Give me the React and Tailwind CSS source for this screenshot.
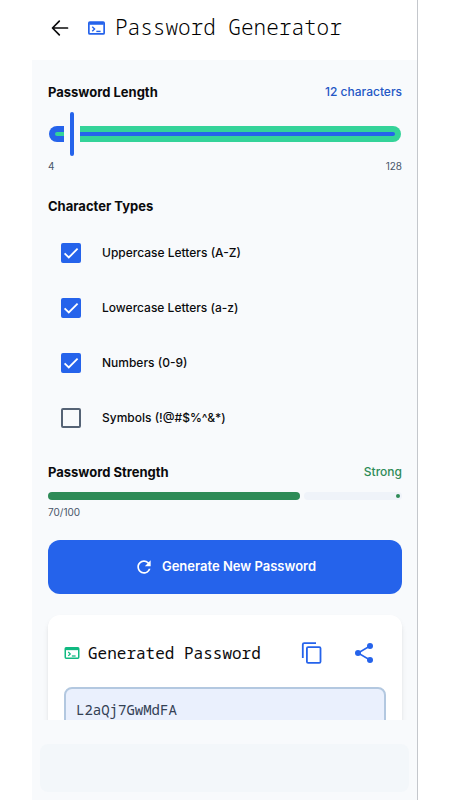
import { useState } from 'react'
import { MdRefresh } from 'react-icons/md'

const MIN = 4
const MAX = 128

const TYPES = [
  { id: 'upper', label: 'Uppercase Letters (A-Z)', chars: 'ABCDEFGHIJKLMNOPQRSTUVWXYZ' },
  { id: 'lower', label: 'Lowercase Letters (a-z)', chars: 'abcdefghijklmnopqrstuvwxyz' },
  { id: 'numbers', label: 'Numbers (0-9)', chars: '0123456789' },
  { id: 'symbols', label: 'Symbols (!@#$%^&*)', chars: '!@#$%^&*' },
]

function BackIcon({ className }) {
  return (
    <svg viewBox="0 0 24 24" fill="none" stroke="currentColor" strokeWidth="1.7" strokeLinecap="round" strokeLinejoin="round" className={className}>
      <path d="M19.5 12H4.8M11.3 5.2 4.5 12l6.8 6.8" />
    </svg>
  )
}

function TerminalIcon({ className }) {
  return (
    <svg viewBox="0 0 20 16" fill="none" stroke="currentColor" className={className}>
      <rect x="1" y="1" width="18" height="14" rx="1.2" strokeWidth="2" />
      <path d="M1.5 2.6h17" strokeWidth="3.2" />
      <path d="m5 6.6 2.7 2.6L5 11.8" strokeWidth="1.7" />
      <path d="M9.8 12h5" strokeWidth="1.7" />
    </svg>
  )
}

function CheckIcon({ className }) {
  return (
    <svg viewBox="0 0 20 20" fill="none" stroke="currentColor" strokeWidth="1.8" className={className}>
      <path d="m3.6 10.4 4.2 4.1 8.8-8.8" />
    </svg>
  )
}

function CopyIcon({ className }) {
  return (
    <svg viewBox="0 0 24 24" fill="none" stroke="currentColor" strokeWidth="1.8" className={className}>
      <path d="M16 2.2H4.2a1.4 1.4 0 0 0-1.4 1.4V17" />
      <rect x="6.9" y="6.1" width="13.6" height="15.8" rx="1.2" />
    </svg>
  )
}

function ShareIcon({ className }) {
  return (
    <svg viewBox="0 0 24 24" fill="currentColor" stroke="currentColor" className={className}>
      <path d="M18 5 6 12l12 7" fill="none" strokeWidth="1.5" />
      <circle cx="18" cy="5" r="3" stroke="none" />
      <circle cx="6" cy="12" r="3" stroke="none" />
      <circle cx="18" cy="19" r="3" stroke="none" />
    </svg>
  )
}

function LengthSlider({ value, onChange }) {
  const pct = ((value - MIN) / (MAX - MIN)) * 100
  return (
    <div className="relative mx-px flex h-11 items-center gap-1.5">
      <div
        className="flex h-4 shrink-0 items-center overflow-hidden rounded-l-full rounded-r-xs bg-[#2563eb] pl-1.5"
        style={{ width: `calc(${pct}% - 8px)` }}
      >
        <div className="h-1 flex-1 rounded-l-full bg-[#34d399]" />
      </div>
      <div className="h-11 w-1 shrink-0 rounded-full bg-[#2563eb]" />
      <div className="flex h-4 flex-1 items-center rounded-l-xs rounded-r-full bg-[#34d399] pr-1.5">
        <div className="h-1 flex-1 rounded-r-full bg-[#2563eb]" />
      </div>
      <input
        id="length"
        type="range"
        min={MIN}
        max={MAX}
        value={value}
        onChange={e => onChange(Number(e.target.value))}
        className="absolute inset-0 h-full w-full cursor-pointer opacity-0"
      />
    </div>
  )
}

function TypeOption({ id, label, checked, onChange }) {
  return (
    <label htmlFor={id} className="flex h-[55px] items-center gap-[21px] pl-[13px] text-xs font-medium">
      <span className="grid">
        <input
          id={id}
          type="checkbox"
          checked={checked}
          onChange={onChange}
          className="col-start-1 row-start-1 size-5 appearance-none rounded-xs border-2 border-[#556375] checked:border-[#2563eb] checked:bg-[#2563eb]"
        />
        {checked && <CheckIcon className="pointer-events-none col-start-1 row-start-1 size-5 text-white" />}
      </span>
      {label}
    </label>
  )
}

export default function App() {
  const [length, setLength] = useState(12)
  const [enabled, setEnabled] = useState({ upper: true, lower: true, numbers: true, symbols: false })
  const [password, setPassword] = useState('L2aQj7GwMdFA')
  const score = 70

  function generate() {
    const pool = TYPES.filter(t => enabled[t.id]).map(t => t.chars).join('')
    if (!pool) return
    const values = crypto.getRandomValues(new Uint32Array(length))
    setPassword(Array.from(values, v => pool[v % pool.length]).join(''))
  }

  return (
    <div className="h-screen bg-white px-8 font-['Inter',sans-serif] text-[#0b0b0d]">
      <div className="flex h-full flex-col border-r border-[#c4c7cc] bg-[#f8fafc]">
        <header className="flex h-[60px] shrink-0 items-center bg-white px-4 pb-1">
          <button type="button" aria-label="Back"><BackIcon className="size-6" /></button>
          <TerminalIcon className="ml-4 h-[14px] w-[17px] text-[#2563eb]" />
          <h1 className="ml-2.5 font-['Noto_Sans_Mono','DejaVu_Sans_Mono',monospace] text-[21px] font-light whitespace-nowrap text-black">Password Generator</h1>
        </header>

        <main className="min-h-0 flex-1 overflow-hidden pr-[15px] pl-4 pt-[22px]">
          <div className="flex items-center justify-between leading-5">
            <label htmlFor="length" className="text-[13px] font-bold">Password Length</label>
            <span className="text-xs font-medium text-[#2457c5]">{length} characters</span>
          </div>
          <div className="mt-2.5">
            <LengthSlider value={length} onChange={setLength} />
          </div>
          <div className="mt-0.5 flex justify-between text-[10px] leading-4 text-[#475569]">
            <span>{MIN}</span>
            <span>{MAX}</span>
          </div>

          <h2 className="mt-[22px] text-[13px] leading-5 font-bold">Character Types</h2>
          <div className="mt-[9px]">
            {TYPES.map(t => (
              <TypeOption
                key={t.id}
                id={t.id}
                label={t.label}
                checked={enabled[t.id]}
                onChange={() => setEnabled({ ...enabled, [t.id]: !enabled[t.id] })}
              />
            ))}
          </div>

          <div className="mt-[17px] flex items-center justify-between leading-5">
            <h2 className="text-[13px] font-bold">Password Strength</h2>
            <span className="text-xs font-medium text-[#2e8b57]">Strong</span>
          </div>
          <div role="progressbar" aria-label="Password strength" aria-valuenow={score} className="mt-2.5 flex h-2 gap-1">
            <div className="rounded-full bg-[#2e8b57]" style={{ width: `calc(${score}% + 4px)` }} />
            <div className="flex flex-1 items-center justify-end rounded-full bg-[#eff3f9] pr-0.5">
              <div className="size-1 rounded-full bg-[#2e8b57]" />
            </div>
          </div>
          <p className="mt-1 text-[10px] leading-4 text-[#475569]">{score}/100</p>

          <button
            type="button"
            onClick={generate}
            className="mt-5 flex h-[54px] w-full items-center justify-center gap-2 rounded-xl bg-[#2563eb] text-[13px] font-semibold text-white"
          >
            <MdRefresh className="size-5" />
            Generate New Password
          </button>

          <section className="mt-[21px] rounded-xl bg-white px-4 pt-4 pb-6 shadow-md">
            <div className="flex items-center">
              <TerminalIcon className="h-3 w-4 shrink-0 text-[#10b981]" />
              <h2 className="ml-2 font-['Noto_Sans_Mono','DejaVu_Sans_Mono',monospace] text-base whitespace-nowrap">Generated Password</h2>
              <button type="button" aria-label="Copy" className="ml-auto grid size-11 place-items-center text-[#2563eb]">
                <CopyIcon className="size-6" />
              </button>
              <button type="button" aria-label="Share" className="ml-2 grid size-11 place-items-center text-[#2563eb]">
                <ShareIcon className="size-6" />
              </button>
            </div>
            <input
              type="text"
              readOnly
              aria-label="Generated password"
              value={password}
              className="mt-3 h-11 w-full rounded-lg border-2 border-[#b3c8e0] bg-[#eaf0fd] px-2.5 font-['Noto_Sans_Mono','DejaVu_Sans_Mono',monospace] text-sm text-[#334155]"
            />
          </section>
        </main>

        <div className="mx-2 mt-6 mb-2 h-12 shrink-0 rounded-lg bg-[#f3f7fa]" />
      </div>
    </div>
  )
}
